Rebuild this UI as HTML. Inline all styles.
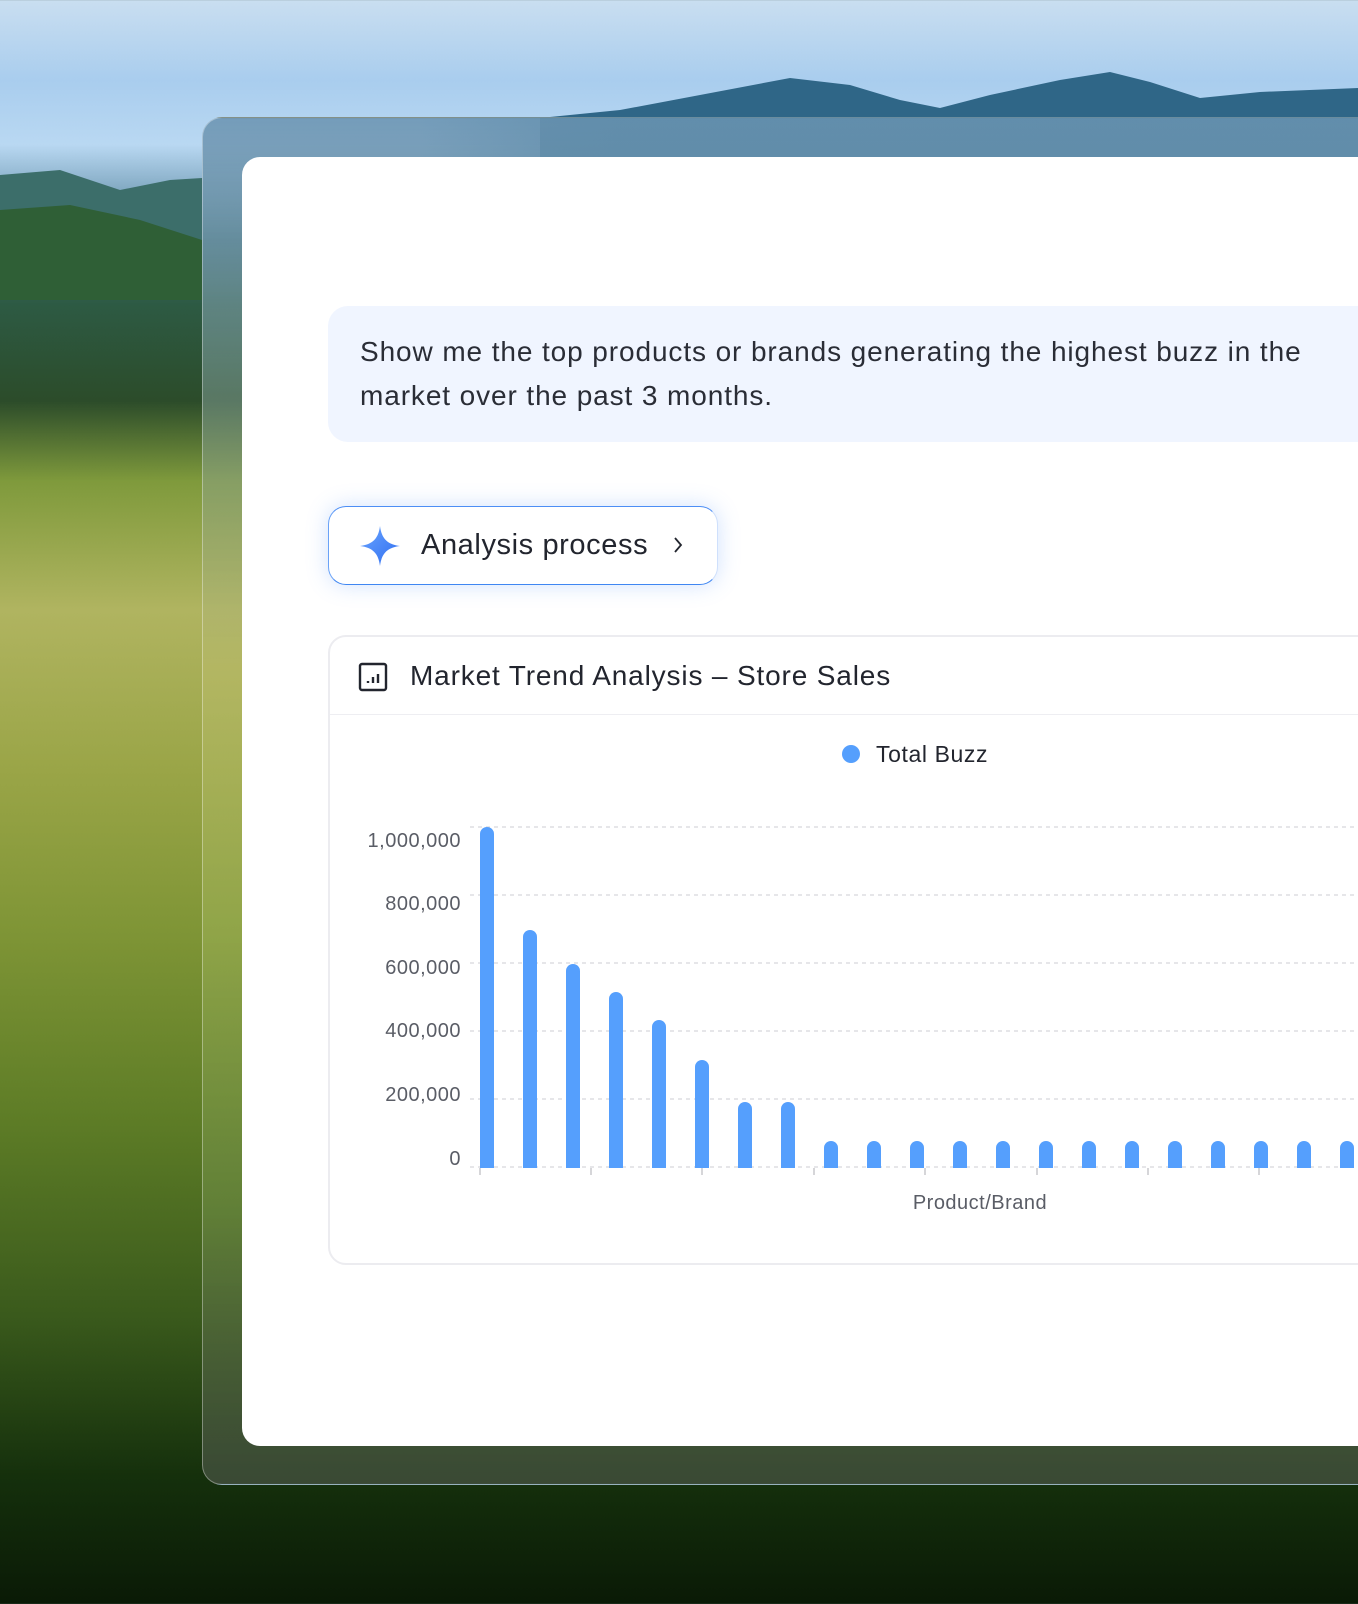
<!DOCTYPE html>
<html><head><meta charset="utf-8"><style>
*{margin:0;padding:0;box-sizing:border-box}
body{width:1358px;height:1604px;overflow:hidden;position:relative;font-family:"Liberation Sans",sans-serif;
background:linear-gradient(180deg,#c9def0 0%,#a9cdee 5%,#b9d8f2 9%,#7fa7c0 12%,#3b6d7c 15%,#2d5a43 19%,#2c4c2a 25%,#7f9a3c 30%,#b0b460 38%,#9aa547 48%,#7f9536 58%,#5d7c26 70%,#3a5a1c 82%,#15300c 92%,#0a1a06 100%);}
.mtn{position:absolute;left:0;top:0;width:1358px;height:300px}
.glass{position:absolute;left:202px;top:117px;width:1200px;height:1368px;border-radius:20px;
background:linear-gradient(180deg,rgba(110,150,180,.9) 0%,rgba(120,150,140,.6) 20%,rgba(190,190,110,.5) 40%,rgba(160,180,90,.5) 60%,rgba(110,140,70,.6) 80%,rgba(60,75,55,.95) 100%);
border:1px solid rgba(255,255,255,.35)}
.pl{position:absolute;left:420px;top:117px;width:980px;height:42px;background:linear-gradient(90deg,rgba(95,140,170,0),rgba(95,140,170,.7) 20%,rgba(95,140,170,.7))}
.panel{position:absolute;left:242px;top:157px;width:1200px;height:1289px;background:#fff;border-radius:18px}
.bubble{position:absolute;left:328px;top:306px;width:1100px;height:136px;background:#f0f5ff;border-radius:20px;
padding:24px 0 0 32px;font-size:28px;line-height:44px;color:#2a2d36;letter-spacing:.9px}
.btn{position:absolute;left:328px;top:506px;width:390px;height:79px;background:#fff;border-radius:18px;
border-top:1.5px solid #4d8ef5;border-left:1.5px solid #6aa2f7;border-bottom:1.5px solid #3f86f2;border-right:1.5px solid #cfe0fc;
box-shadow:0 0 22px rgba(90,150,250,.28)}
.btn .t{position:absolute;left:92px;top:22px;font-size:29px;color:#22252e;letter-spacing:.6px}
.card{position:absolute;left:328px;top:635px;width:1100px;height:630px;border:2px solid #ececf0;border-radius:18px;background:#fff}
.card .hd{height:78px;border-bottom:1.5px solid #eeeef2;position:relative}
.card .hd .t{position:absolute;left:80px;top:23px;font-size:28px;color:#22252e;letter-spacing:.85px}
</style></head><body>
<svg class="mtn" viewBox="0 0 1358 300" preserveAspectRatio="none">
<path d="M540 118 L620 110 L700 95 L790 78 L850 85 L900 100 L940 108 L990 95 L1060 80 L1110 72 L1150 82 L1200 98 L1260 92 L1358 88 L1358 160 L540 160Z" fill="#2f6687"/>
<path d="M0 175 L60 170 L120 190 L170 180 L202 178 L202 300 L0 300Z" fill="#3c6e6a"/>
<path d="M0 210 L70 205 L140 220 L202 240 L202 300 L0 300Z" fill="#2f5f36"/>
</svg>
<div class="glass"></div>
<div class="pl"></div>
<div class="panel"></div>
<div class="bubble">Show me the top products or brands generating the highest buzz in the<br>market over the past 3 months.</div>
<div class="btn">
<svg style="position:absolute;left:30px;top:18px" width="42" height="42" viewBox="0 0 40 40"><defs><linearGradient id="g" x1="0" y1="0" x2="1" y2="1"><stop offset="0" stop-color="#6aa5ff"/><stop offset="1" stop-color="#2f6df0"/></linearGradient></defs><path d="M20 1 C21.5 13 27 18.5 39 20 C27 21.5 21.5 27 20 39 C18.5 27 13 21.5 1 20 C13 18.5 18.5 13 20 1Z" fill="url(#g)"/></svg>
<div class="t">Analysis process</div>
<svg style="position:absolute;left:343px;top:29px" width="12" height="18" viewBox="0 0 12 18"><path d="M3 2 L9 9 L3 16" fill="none" stroke="#22252e" stroke-width="1.8"/></svg>
</div>
<div class="card">
<div class="hd">
<svg style="position:absolute;left:28px;top:25px" width="30" height="30" viewBox="0 0 30 30"><rect x="2" y="2" width="26" height="26" rx="2" fill="none" stroke="#22252e" stroke-width="2.4"/><path d="M10 21v-2M15 21v-6M20 21v-9" stroke="#22252e" stroke-width="2.4"/></svg>
<div class="t">Market Trend Analysis – Store Sales</div>
</div>
</div>
<svg style="position:absolute;left:0;top:0" width="1358" height="1604">
<circle cx="851" cy="754" r="9" fill="#559ffd"/>
<text x="876" y="762" font-family="Liberation Sans" font-size="23" fill="#22252e" letter-spacing=".6">Total Buzz</text>
<g stroke="#d8d8dc" stroke-width="1.3" stroke-dasharray="4 4">
<line x1="470" y1="827" x2="1358" y2="827"/><line x1="470" y1="895" x2="1358" y2="895"/><line x1="470" y1="963" x2="1358" y2="963"/><line x1="470" y1="1031" x2="1358" y2="1031"/><line x1="470" y1="1099" x2="1358" y2="1099"/><line x1="470" y1="1167" x2="1358" y2="1167"/>
</g>
<g stroke="#c8c8cc" stroke-width="1.5"><line x1="480" y1="1168" x2="480" y2="1175"/><line x1="591" y1="1168" x2="591" y2="1175"/><line x1="702" y1="1168" x2="702" y2="1175"/><line x1="814" y1="1168" x2="814" y2="1175"/><line x1="925" y1="1168" x2="925" y2="1175"/><line x1="1037" y1="1168" x2="1037" y2="1175"/><line x1="1148" y1="1168" x2="1148" y2="1175"/><line x1="1259" y1="1168" x2="1259" y2="1175"/></g>
<g font-family="Liberation Sans" font-size="20" fill="#5a5d66" text-anchor="end" letter-spacing=".5">
<text x="461" y="847">1,000,000</text><text x="461" y="910">800,000</text><text x="461" y="974">600,000</text><text x="461" y="1037">400,000</text><text x="461" y="1101">200,000</text><text x="461" y="1165">0</text>
</g>
<text x="980" y="1209" font-family="Liberation Sans" font-size="20" fill="#5a5d66" text-anchor="middle" letter-spacing=".5">Product/Brand</text>
<g fill="#559ffd">
<path d="M480 1168V834a7 7 0 0 1 14 0V1168Z"/>
<path d="M523 1168V937a7 7 0 0 1 14 0V1168Z"/>
<path d="M566 1168V971a7 7 0 0 1 14 0V1168Z"/>
<path d="M609 1168V999a7 7 0 0 1 14 0V1168Z"/>
<path d="M652 1168V1027a7 7 0 0 1 14 0V1168Z"/>
<path d="M695 1168V1067a7 7 0 0 1 14 0V1168Z"/>
<path d="M738 1168V1109a7 7 0 0 1 14 0V1168Z"/>
<path d="M781 1168V1109a7 7 0 0 1 14 0V1168Z"/>
<path d="M824 1168V1148a7 7 0 0 1 14 0V1168Z"/>
<path d="M867 1168V1148a7 7 0 0 1 14 0V1168Z"/>
<path d="M910 1168V1148a7 7 0 0 1 14 0V1168Z"/>
<path d="M953 1168V1148a7 7 0 0 1 14 0V1168Z"/>
<path d="M996 1168V1148a7 7 0 0 1 14 0V1168Z"/>
<path d="M1039 1168V1148a7 7 0 0 1 14 0V1168Z"/>
<path d="M1082 1168V1148a7 7 0 0 1 14 0V1168Z"/>
<path d="M1125 1168V1148a7 7 0 0 1 14 0V1168Z"/>
<path d="M1168 1168V1148a7 7 0 0 1 14 0V1168Z"/>
<path d="M1211 1168V1148a7 7 0 0 1 14 0V1168Z"/>
<path d="M1254 1168V1148a7 7 0 0 1 14 0V1168Z"/>
<path d="M1297 1168V1148a7 7 0 0 1 14 0V1168Z"/>
<path d="M1340 1168V1148a7 7 0 0 1 14 0V1168Z"/>
</g>
</svg>
</body></html>
